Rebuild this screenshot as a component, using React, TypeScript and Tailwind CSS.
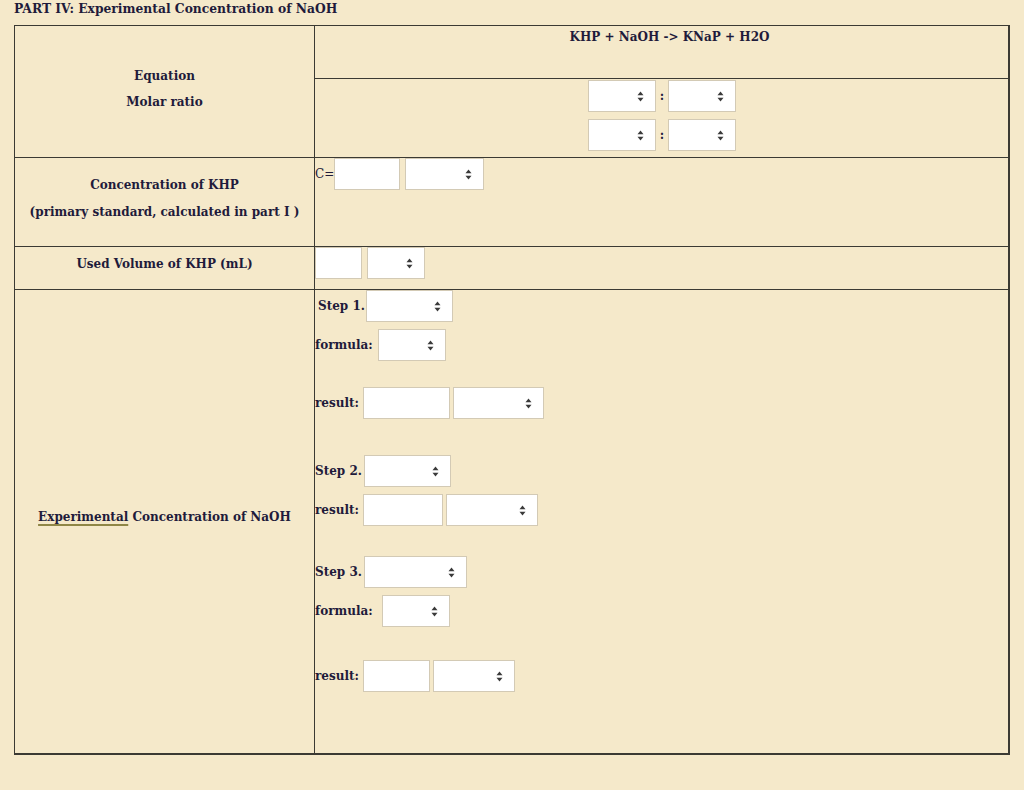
import { ReactNode } from "react";

// small double-triangle caret used on the select boxes
function Caret() {
  return (
    <svg width="7" height="11" viewBox="0 0 7 11" className="shrink-0">
      <path d="M3.5 0.5 L6.5 4.2 H0.5 Z" fill="#3a3a3a" />
      <path d="M3.5 10.5 L6.5 6.8 H0.5 Z" fill="#3a3a3a" />
    </svg>
  );
}

function SelectBox({ w, className = "" }: { w: string; className?: string }) {
  return (
    <div className={`${w} ${className} h-[32px] shrink-0 bg-white border border-[#d3cab5] flex items-center justify-end pr-[11px]`}>
      <Caret />
    </div>
  );
}

function InputBox({ w }: { w: string }) {
  return <div className={`${w} h-[32px] shrink-0 bg-white border border-[#d3cab5]`} />;
}

function Label({ children, className = "" }: { children: ReactNode; className?: string }) {
  return <span className={`shrink-0 ${className}`}>{children}</span>;
}

export default function App() {
  return (
    <div className="w-[1024px] h-[790px] bg-[#f5e9ca] text-[#1f1b3b] font-['DejaVu_Serif',serif] font-bold text-[12px] px-[14px] pt-[1px]">
      <h1 className="text-[12.3px] leading-[16px] font-bold">PART IV: Experimental Concentration of NaOH</h1>

      <div className="mt-[8px] w-[996px] border-l border-t border-r-2 border-b-2 border-[#3b3a33]">
        {/* equation + molar ratio */}
        <div className="flex h-[132px] border-b border-[#3b3a33]">
          <div className="w-[300px] border-r border-[#3b3a33] flex flex-col items-center justify-center pb-[6px] leading-[26px]">
            <span>Equation</span>
            <span>Molar ratio</span>
          </div>
          <div className="flex-1 flex flex-col">
            <div className="h-[53px] border-b border-[#3b3a33] text-center pt-[3px] pl-[16px] leading-[16px]">
              KHP + NaOH -&gt; KNaP + H2O
            </div>
            <div className="flex-1 flex flex-col items-center pt-[1px] pl-[1px] gap-[7px]">
              {[0, 1].map((i) => (
                <div key={i} className="flex items-center gap-[4px]">
                  <SelectBox w="w-[68px]" />
                  <span>:</span>
                  <SelectBox w="w-[68px]" />
                </div>
              ))}
            </div>
          </div>
        </div>

        {/* concentration of KHP */}
        <div className="flex h-[89px] border-b border-[#3b3a33]">
          <div className="w-[300px] border-r border-[#3b3a33] flex flex-col items-center justify-center pb-[6px] leading-[27px]">
            <span>Concentration of KHP</span>
            <span>(primary standard, calculated in part I )</span>
          </div>
          <div className="flex-1 flex items-start gap-[5px]">
            <div className="flex items-center h-[32px]">
              <Label className="font-normal">C=</Label>
              <InputBox w="w-[66px]" />
            </div>
            <SelectBox w="w-[79px]" />
          </div>
        </div>

        {/* used volume */}
        <div className="flex h-[43px] border-b border-[#3b3a33]">
          <div className="w-[300px] border-r border-[#3b3a33] flex items-start justify-center pt-[9px] leading-[16px]">
            Used Volume of KHP (mL)
          </div>
          <div className="flex-1 flex items-start gap-[5px]">
            <InputBox w="w-[47px]" />
            <SelectBox w="w-[58px]" />
          </div>
        </div>

        {/* experimental concentration of NaOH */}
        <div className="flex h-[463px]">
          <div className="w-[300px] border-r border-[#3b3a33] flex items-center justify-center pb-[10px]">
            <span>
              <span className="underline decoration-[#8f8646] decoration-2 underline-offset-[3px]">Experimental</span>{" "}
              Concentration of NaOH
            </span>
          </div>
          <div className="flex-1 flex flex-col">
            <div className="flex items-center gap-[1px] pl-[3px]">
              <Label>Step 1.</Label>
              <SelectBox w="w-[87px]" />
            </div>
            <div className="flex items-center gap-[5px] mt-[7px]">
              <Label>formula:</Label>
              <SelectBox w="w-[68px]" />
            </div>
            <div className="flex items-center gap-[4px] mt-[26px]">
              <Label>result:</Label>
              <InputBox w="w-[87px]" />
              <SelectBox w="w-[91px]" className="-ml-[1px]" />
            </div>
            <div className="flex items-center gap-[2px] mt-[36px]">
              <Label>Step 2.</Label>
              <SelectBox w="w-[87px]" />
            </div>
            <div className="flex items-center gap-[4px] mt-[7px]">
              <Label>result:</Label>
              <InputBox w="w-[80px]" />
              <SelectBox w="w-[92px]" className="-ml-[1px]" />
            </div>
            <div className="flex items-center gap-[2px] mt-[30px]">
              <Label>Step 3.</Label>
              <SelectBox w="w-[103px]" />
            </div>
            <div className="flex items-center gap-[9px] mt-[7px]">
              <Label>formula:</Label>
              <SelectBox w="w-[68px]" />
            </div>
            <div className="flex items-center gap-[4px] mt-[33px]">
              <Label>result:</Label>
              <InputBox w="w-[67px]" />
              <SelectBox w="w-[82px]" className="-ml-[1px]" />
            </div>
          </div>
        </div>
      </div>
    </div>
  );
}
